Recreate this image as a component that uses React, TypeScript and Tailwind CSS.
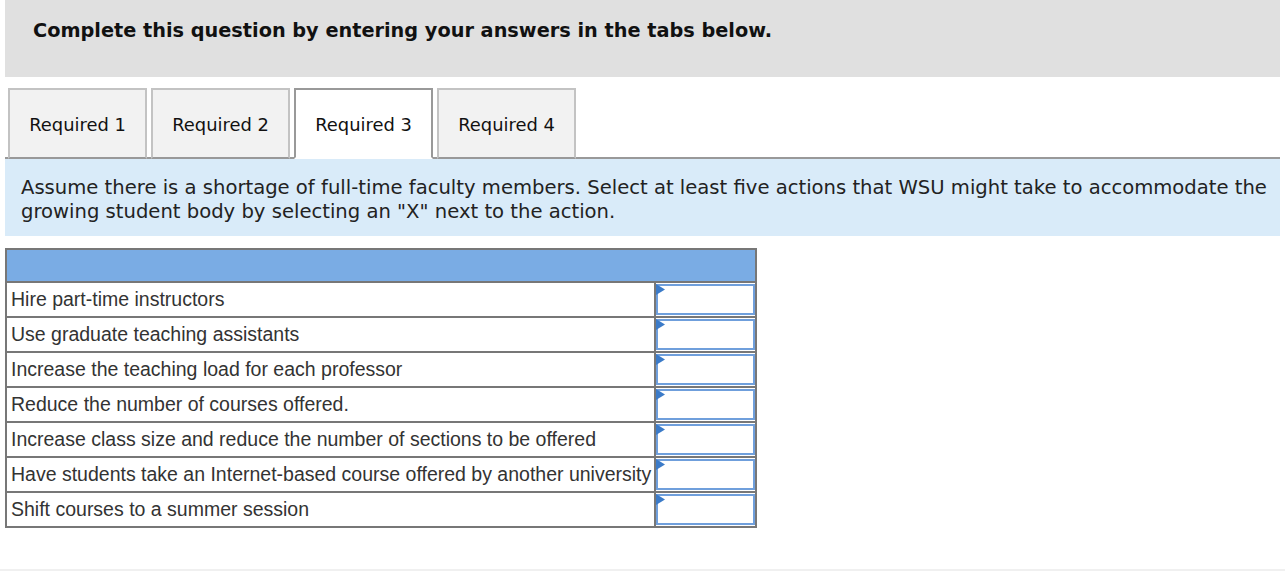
const tabs = ['Required 1', 'Required 2', 'Required 3', 'Required 4']

const actions = [
  'Hire part-time instructors',
  'Use graduate teaching assistants',
  'Increase the teaching load for each professor',
  'Reduce the number of courses offered.',
  'Increase class size and reduce the number of sections to be offered',
  'Have students take an Internet-based course offered by another university',
  'Shift courses to a summer session',
]

function AnswerCell() {
  return (
    <td className="border-2 border-[#777] p-0 w-[101px]">
      <div className="relative h-[31px] border-2 border-[#6f9fdc] bg-white">
        <svg className="absolute -left-[2px] -top-[2px]" width="10" height="12" viewBox="0 0 10 12">
          <polygon points="0,0 9,5.5 0,11" fill="#3c7bc8" />
        </svg>
      </div>
    </td>
  )
}

export default function App() {
  const active = 2
  return (
    <div className="w-[1285px] h-[573px] bg-white overflow-hidden relative" style={{ fontFamily: '"DejaVu Sans", Verdana, sans-serif' }}>
      <div className="mx-[5px]">
        {/* Heading */}
        <div className="h-[77px] bg-[#e0e0e0] pl-[28px] pt-[18px]">
          <h1 className="text-[19.3px] leading-[26px] font-bold text-[#111]">Complete this question by entering your answers in the tabs below.</h1>
        </div>

        {/* Tabs */}
        <div className="mt-[11px] flex gap-[4px] pl-[3px] border-b-2 border-[#999]">
          {tabs.map((t, i) => (
            <div
              key={t}
              className={`w-[139px] h-[71px] -mb-[2px] pt-[3px] flex items-center justify-center text-[17.9px] text-[#111] border-2 ${i === active ? 'bg-white border-[#999] border-b-white' : 'bg-[#f2f2f2] border-[#c3c3c3] border-b-[#999]'}`}
            >
              {t}
            </div>
          ))}
        </div>

        {/* Instructions */}
        <div className="h-[77px] bg-[#d9ebf9] pl-[16px] pr-[6px] pt-[17px] text-[19.6px] leading-[24px] text-[#222]">
          Assume there is a shortage of full-time faculty members. Select at least five actions that WSU might take to accommodate the growing student body by selecting an "X" next to the action.
        </div>

        {/* Table */}
        <table className="mt-[12px] border-collapse w-[752px]" style={{ fontFamily: '"Liberation Sans", Arial, sans-serif' }}>
          <thead>
            <tr>
              <th colSpan={2} className="h-[33px] bg-[#7aace4] border-2 border-[#777] p-0"></th>
            </tr>
          </thead>
          <tbody>
            {actions.map((a) => (
              <tr key={a} className="h-[35px]">
                <td className="border-2 border-[#777] pl-[4px] pr-0 py-0 text-[19.5px] text-[#333] leading-[31px] whitespace-nowrap">{a}</td>
                <AnswerCell />
              </tr>
            ))}
          </tbody>
        </table>
      </div>
      <div className="absolute left-0 right-0 top-[569px] h-[2px] bg-[#f0f0f0]" />
    </div>
  )
}
